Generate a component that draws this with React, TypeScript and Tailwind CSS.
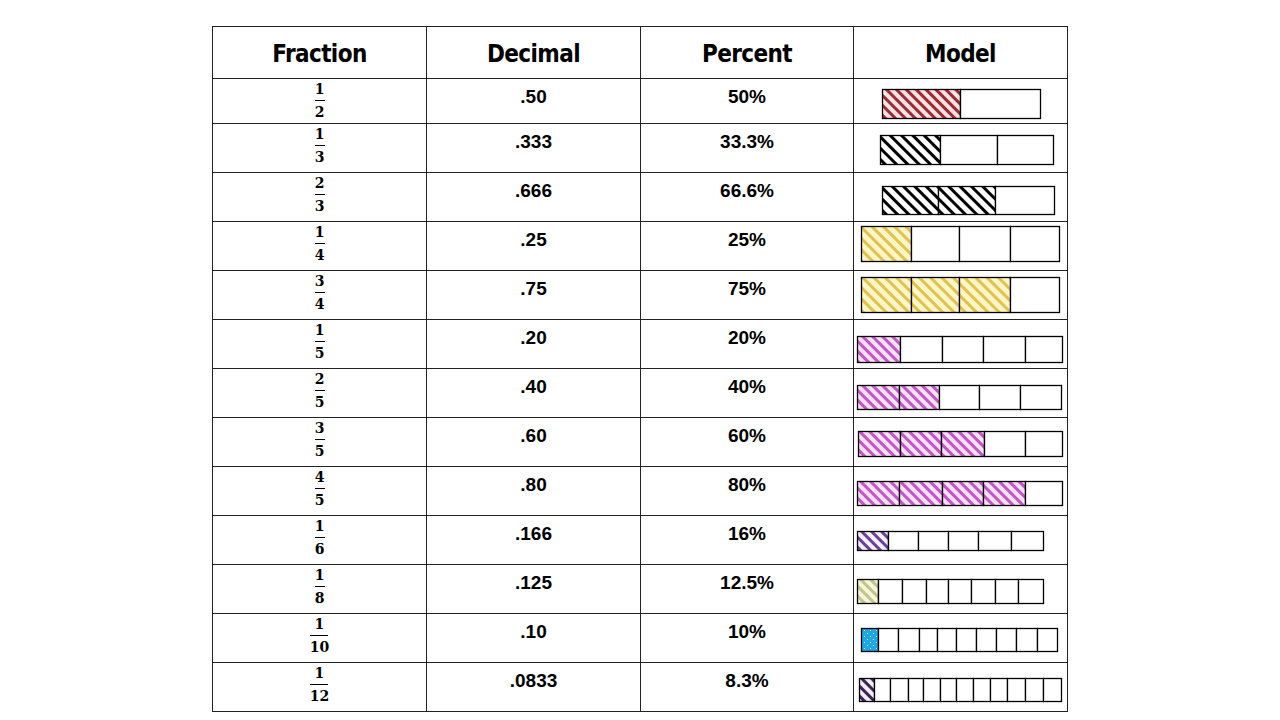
import React from 'react';

type Bar = {
  x0: number;
  x1: number;
  y0: number;
  y1: number;
  div: number[];
  shaded: number;
  fill: string;
};

type Row = {
  num: string;
  den: string;
  dec: string;
  pct: string;
  top: number; // y of the line above the row
  h: number;
  bar: Bar;
};

// column 4 content starts right after the border at x=853
const COL_X = 854;
const CELL_W = 213;

const ROWS: Row[] = [
  { num: '1', den: '2', dec: '.50', pct: '50%', top: 78, h: 45, bar: { x0: 882, x1: 1040, y0: 89, y1: 118, div: [960], shaded: 1, fill: 'red' } },
  { num: '1', den: '3', dec: '.333', pct: '33.3%', top: 123, h: 49, bar: { x0: 880, x1: 1053, y0: 135, y1: 164, div: [940, 997], shaded: 1, fill: 'black' } },
  { num: '2', den: '3', dec: '.666', pct: '66.6%', top: 172, h: 49, bar: { x0: 882, x1: 1054, y0: 186, y1: 214, div: [938, 995], shaded: 2, fill: 'black' } },
  { num: '1', den: '4', dec: '.25', pct: '25%', top: 221, h: 49, bar: { x0: 861, x1: 1059, y0: 226, y1: 261, div: [911, 959, 1010], shaded: 1, fill: 'yellow' } },
  { num: '3', den: '4', dec: '.75', pct: '75%', top: 270, h: 49, bar: { x0: 861, x1: 1059, y0: 277, y1: 312, div: [911, 959, 1010], shaded: 3, fill: 'yellow' } },
  { num: '1', den: '5', dec: '.20', pct: '20%', top: 319, h: 49, bar: { x0: 857, x1: 1062, y0: 336, y1: 362, div: [900, 942, 983, 1025], shaded: 1, fill: 'pink' } },
  { num: '2', den: '5', dec: '.40', pct: '40%', top: 368, h: 49, bar: { x0: 857, x1: 1061, y0: 385, y1: 409, div: [899, 939, 979, 1020], shaded: 2, fill: 'pink' } },
  { num: '3', den: '5', dec: '.60', pct: '60%', top: 417, h: 49, bar: { x0: 858, x1: 1062, y0: 431, y1: 456, div: [900, 941, 984, 1025], shaded: 3, fill: 'pink' } },
  { num: '4', den: '5', dec: '.80', pct: '80%', top: 466, h: 49, bar: { x0: 857, x1: 1062, y0: 481, y1: 505, div: [899, 942, 983, 1025], shaded: 4, fill: 'pink' } },
  { num: '1', den: '6', dec: '.166', pct: '16%', top: 515, h: 49, bar: { x0: 857, x1: 1043, y0: 531, y1: 550, div: [888, 918, 948, 978, 1011], shaded: 1, fill: 'purple' } },
  { num: '1', den: '8', dec: '.125', pct: '12.5%', top: 564, h: 49, bar: { x0: 857, x1: 1043, y0: 579, y1: 603, div: [878, 902, 926, 948, 971, 995, 1018], shaded: 1, fill: 'olive' } },
  { num: '1', den: '10', dec: '.10', pct: '10%', top: 613, h: 49, bar: { x0: 861, x1: 1057, y0: 628, y1: 651, div: [878, 898, 919, 937, 956, 976, 996, 1016, 1037], shaded: 1, fill: 'blue' } },
  { num: '1', den: '12', dec: '.0833', pct: '8.3%', top: 662, h: 49, bar: { x0: 859, x1: 1061, y0: 678, y1: 701, div: [874, 890, 908, 923, 940, 956, 973, 990, 1007, 1025, 1043], shaded: 1, fill: 'dark' } },
];

// stripe patterns: [background, stripe colour, period, stripe width]
const STRIPES: Record<string, [string, string, number, number]> = {
  red: ['#fde3e3', '#9e2a32', 7, 3],
  black: ['#ffffff', '#000000', 8, 3],
  yellow: ['#fff6c8', '#e2c24e', 8, 3],
  pink: ['#fbe0fb', '#c157c4', 7, 3],
  purple: ['#f6f0fb', '#6b3f9e', 7, 3],
  olive: ['#f5f5da', '#c3c38a', 7, 3],
  dark: ['#f3ecfa', '#3b2451', 7, 3],
};

function Patterns({ id }: { id: string }) {
  return (
    <defs>
      {Object.entries(STRIPES).map(([k, [bg, fg, p, w]]) => (
        <pattern key={k} id={`${id}-${k}`} width={p} height={p} patternUnits="userSpaceOnUse" patternTransform="rotate(-45)">
          <rect width={p} height={p} fill={bg} />
          <rect width={w} height={p} fill={fg} />
        </pattern>
      ))}
      <pattern id={`${id}-blue`} width="6" height="6" patternUnits="userSpaceOnUse">
        <rect width="6" height="6" fill="#1ea7e1" />
        <circle cx="1.5" cy="1.5" r="0.6" fill="#e6f7ff" />
        <circle cx="4.5" cy="4.5" r="0.6" fill="#e6f7ff" />
      </pattern>
    </defs>
  );
}

function Model({ row, idx }: { row: Row; idx: number }) {
  const { bar } = row;
  const oy = row.top + 1;
  const id = `p${idx}`;
  const edges = [bar.x0, ...bar.div, bar.x1];
  return (
    <svg width={CELL_W} height={row.h - 1} className="block">
      <Patterns id={id} />
      {edges.slice(0, -1).map((x, i) => (
        <rect
          key={i}
          x={x - COL_X + 0.5}
          y={bar.y0 - oy + 0.5}
          width={edges[i + 1] - x}
          height={bar.y1 - bar.y0}
          fill={i < bar.shaded ? `url(#${id}-${bar.fill})` : '#ffffff'}
          stroke="#000"
          strokeWidth="1.3"
        />
      ))}
    </svg>
  );
}

function Fraction({ num, den }: { num: string; den: string }) {
  return (
    <div className="flex flex-col items-center font-['DejaVu_Serif',serif] font-bold text-[14px] leading-[14px] text-black">
      <span>{num}</span>
      <span className="block h-px bg-black my-[4px]" style={{ width: den.length > 1 ? 18 : 10 }} />
      <span>{den}</span>
    </div>
  );
}

const head = "flex items-center justify-center h-[52px] border-r border-b border-[#222] font-['DejaVu_Sans',sans-serif] font-stretch-condensed font-bold text-[24px] tracking-[-0.6px] text-black pt-[2px]";
const cell = "border-r border-b border-[#222] flex justify-center";
const txt = "font-['Liberation_Sans',Arial,sans-serif] font-bold text-[19px] text-black leading-none";

export default function App() {
  return (
    <div className="w-[1280px] h-[720px] bg-white overflow-hidden pt-[26px] pl-[212px]">
      <div className="grid grid-cols-[214px_214px_213px_214px] w-[856px] border-t border-l border-[#222]">
        <div className={head}>Fraction</div>
        <div className={head}>Decimal</div>
        <div className={head}>Percent</div>
        <div className={head}>Model</div>
        {ROWS.map((r, i) => (
          <React.Fragment key={i}>
            <div className={`${cell} pt-[3px]`} style={{ height: r.h }}>
              <Fraction num={r.num} den={r.den} />
            </div>
            <div className={`${cell} pt-[8px] ${txt}`} style={{ height: r.h }}>
              {r.dec}
            </div>
            <div className={`${cell} pt-[8px] ${txt}`} style={{ height: r.h }}>
              {r.pct}
            </div>
            <div className="border-r border-b border-[#222]" style={{ height: r.h }}>
              <Model row={r} idx={i} />
            </div>
          </React.Fragment>
        ))}
      </div>
    </div>
  );
}
